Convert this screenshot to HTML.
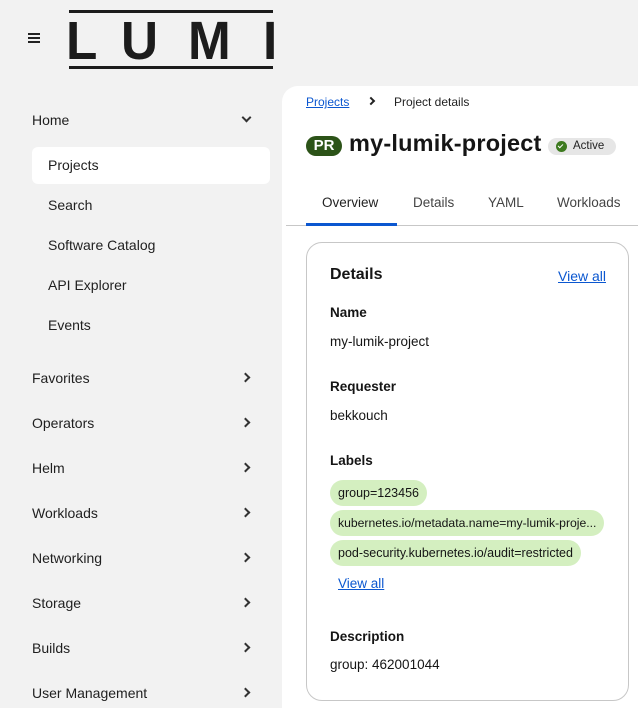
<!DOCTYPE html>
<html><head><style>
*{margin:0;padding:0;box-sizing:border-box}
html,body{width:638px;height:708px;overflow:hidden}
body{background:#f2f2f2;font-family:"Liberation Sans",sans-serif;color:#151515;position:relative}
.a{position:absolute;white-space:nowrap}
.nav{font-size:14px;color:#1f1f1f}
.chev{position:absolute;left:242px;width:7px;height:7px;border-right:2px solid #333;border-bottom:2px solid #333}
.main{position:absolute;left:282px;top:86px;width:400px;height:640px;background:#fff;border-top-left-radius:16px}
.card{position:absolute;left:306px;top:242px;width:323px;height:459px;border:1px solid #c7c7c7;border-radius:16px;background:#fff}
.lbl{position:absolute;left:330px;height:26px;border-radius:13px;background:#d4efc0;font-size:12.5px;line-height:26px;padding:0 8px;color:#151515}
a{color:#0b57d0;text-decoration:underline}
.lg{position:absolute;top:20px;font-size:54px;line-height:40px;height:40px;color:#1c1c1c;font-weight:bold;transform:scaleX(0.95);transform-origin:left}
</style></head><body>
<div class="a" style="left:28px;top:33px;width:12px;height:2px;background:#222;box-shadow:0 4px 0 #222,0 8px 0 #222"></div>
<div class="a" style="left:69px;top:10px;width:204px;height:3px;background:#1c1c1c"></div>
<div class="a" style="left:69px;top:66px;width:204px;height:3px;background:#1c1c1c"></div>
<div class="lg" style="left:66px;top:21px">L</div>
<div class="lg" style="left:121px;top:21px">U</div>
<div class="lg" style="left:188px;top:21px">M</div>
<div class="lg" style="left:263px;top:21px">I</div>

<div class="a nav" style="left:32px;top:112px">Home</div>
<div class="chev" style="top:114px;left:243px;transform:rotate(45deg)"></div>
<div class="a" style="left:32px;top:147px;width:238px;height:37px;background:#fff;border-radius:6px"></div>
<div class="a nav" style="left:48px;top:157px">Projects</div>
<div class="a nav" style="left:48px;top:197px">Search</div>
<div class="a nav" style="left:48px;top:237px">Software Catalog</div>
<div class="a nav" style="left:48px;top:277px">API Explorer</div>
<div class="a nav" style="left:48px;top:317px">Events</div>
<div class="a nav" style="left:32px;top:370px">Favorites</div><div class="chev" style="top:374px;left:242px;transform:rotate(-45deg)"></div>
<div class="a nav" style="left:32px;top:415px">Operators</div><div class="chev" style="top:419px;left:242px;transform:rotate(-45deg)"></div>
<div class="a nav" style="left:32px;top:460px">Helm</div><div class="chev" style="top:464px;left:242px;transform:rotate(-45deg)"></div>
<div class="a nav" style="left:32px;top:505px">Workloads</div><div class="chev" style="top:509px;left:242px;transform:rotate(-45deg)"></div>
<div class="a nav" style="left:32px;top:550px">Networking</div><div class="chev" style="top:554px;left:242px;transform:rotate(-45deg)"></div>
<div class="a nav" style="left:32px;top:595px">Storage</div><div class="chev" style="top:599px;left:242px;transform:rotate(-45deg)"></div>
<div class="a nav" style="left:32px;top:640px">Builds</div><div class="chev" style="top:644px;left:242px;transform:rotate(-45deg)"></div>
<div class="a nav" style="left:32px;top:685px">User Management</div><div class="chev" style="top:689px;left:242px;transform:rotate(-45deg)"></div>

<div class="main"></div>
<div class="a" style="left:306px;top:95px;font-size:12px"><a>Projects</a></div>
<div class="a" style="left:368px;top:98px;width:6px;height:6px;border-right:2px solid #222;border-bottom:2px solid #222;transform:rotate(-45deg)"></div>
<div class="a" style="left:394px;top:95px;font-size:12px;color:#222">Project details</div>
<div class="a" style="left:306px;top:136px;width:36px;height:20px;border-radius:10px;background:#2c5318;color:#fff;font-size:15px;font-weight:bold;line-height:20px;text-align:center">PR</div>
<div class="a" style="left:349px;top:130px;font-size:23.5px;font-weight:bold;color:#151515;letter-spacing:0.2px">my-lumik-project</div>
<div class="a" style="left:548px;top:138px;width:68px;height:17px;border-radius:9px;background:#e6e6e6"></div>
<div class="a" style="left:556px;top:141px;width:11px;height:11px;border-radius:50%;background:#3d7a1f"></div>
<div class="a" style="left:559px;top:143px;width:3px;height:5px;border-right:1.5px solid #fff;border-bottom:1.5px solid #fff;transform:rotate(45deg)"></div>
<div class="a" style="left:573px;top:140px;font-size:11.5px;line-height:13px;color:#222">Active</div>

<div class="a" style="left:322px;top:195px;font-size:13.5px;color:#222">Overview</div>
<div class="a" style="left:413px;top:195px;font-size:13.5px;color:#444">Details</div>
<div class="a" style="left:488px;top:195px;font-size:13.5px;color:#444">YAML</div>
<div class="a" style="left:557px;top:195px;font-size:13.5px;color:#444">Workloads</div>
<div class="a" style="left:286px;top:225px;width:352px;height:1px;background:#c7c7c7"></div>
<div class="a" style="left:306px;top:223px;width:91px;height:3px;background:#0b57d0"></div>

<div class="card"></div>
<div class="a" style="left:330px;top:266px;font-size:16px;font-weight:bold">Details</div>
<div class="a" style="left:558px;top:268px;font-size:14px"><a>View all</a></div>
<div class="a" style="left:330px;top:305px;font-size:13.5px;font-weight:bold">Name</div>
<div class="a" style="left:330px;top:334px;font-size:13.5px">my-lumik-project</div>
<div class="a" style="left:330px;top:379px;font-size:13.5px;font-weight:bold">Requester</div>
<div class="a" style="left:330px;top:408px;font-size:13.5px">bekkouch</div>
<div class="a" style="left:330px;top:453px;font-size:13.5px;font-weight:bold">Labels</div>
<div class="lbl" style="top:480px">group=123456</div>
<div class="lbl" style="top:510px;font-size:12.2px">kubernetes.io/metadata.name=my-lumik-proje...</div>
<div class="lbl" style="top:540px">pod-security.kubernetes.io/audit=restricted</div>
<div class="a" style="left:338px;top:576px;font-size:13.5px"><a>View all</a></div>
<div class="a" style="left:330px;top:629px;font-size:13.5px;font-weight:bold">Description</div>
<div class="a" style="left:330px;top:657px;font-size:13.5px">group: 462001044</div>
</body></html>
